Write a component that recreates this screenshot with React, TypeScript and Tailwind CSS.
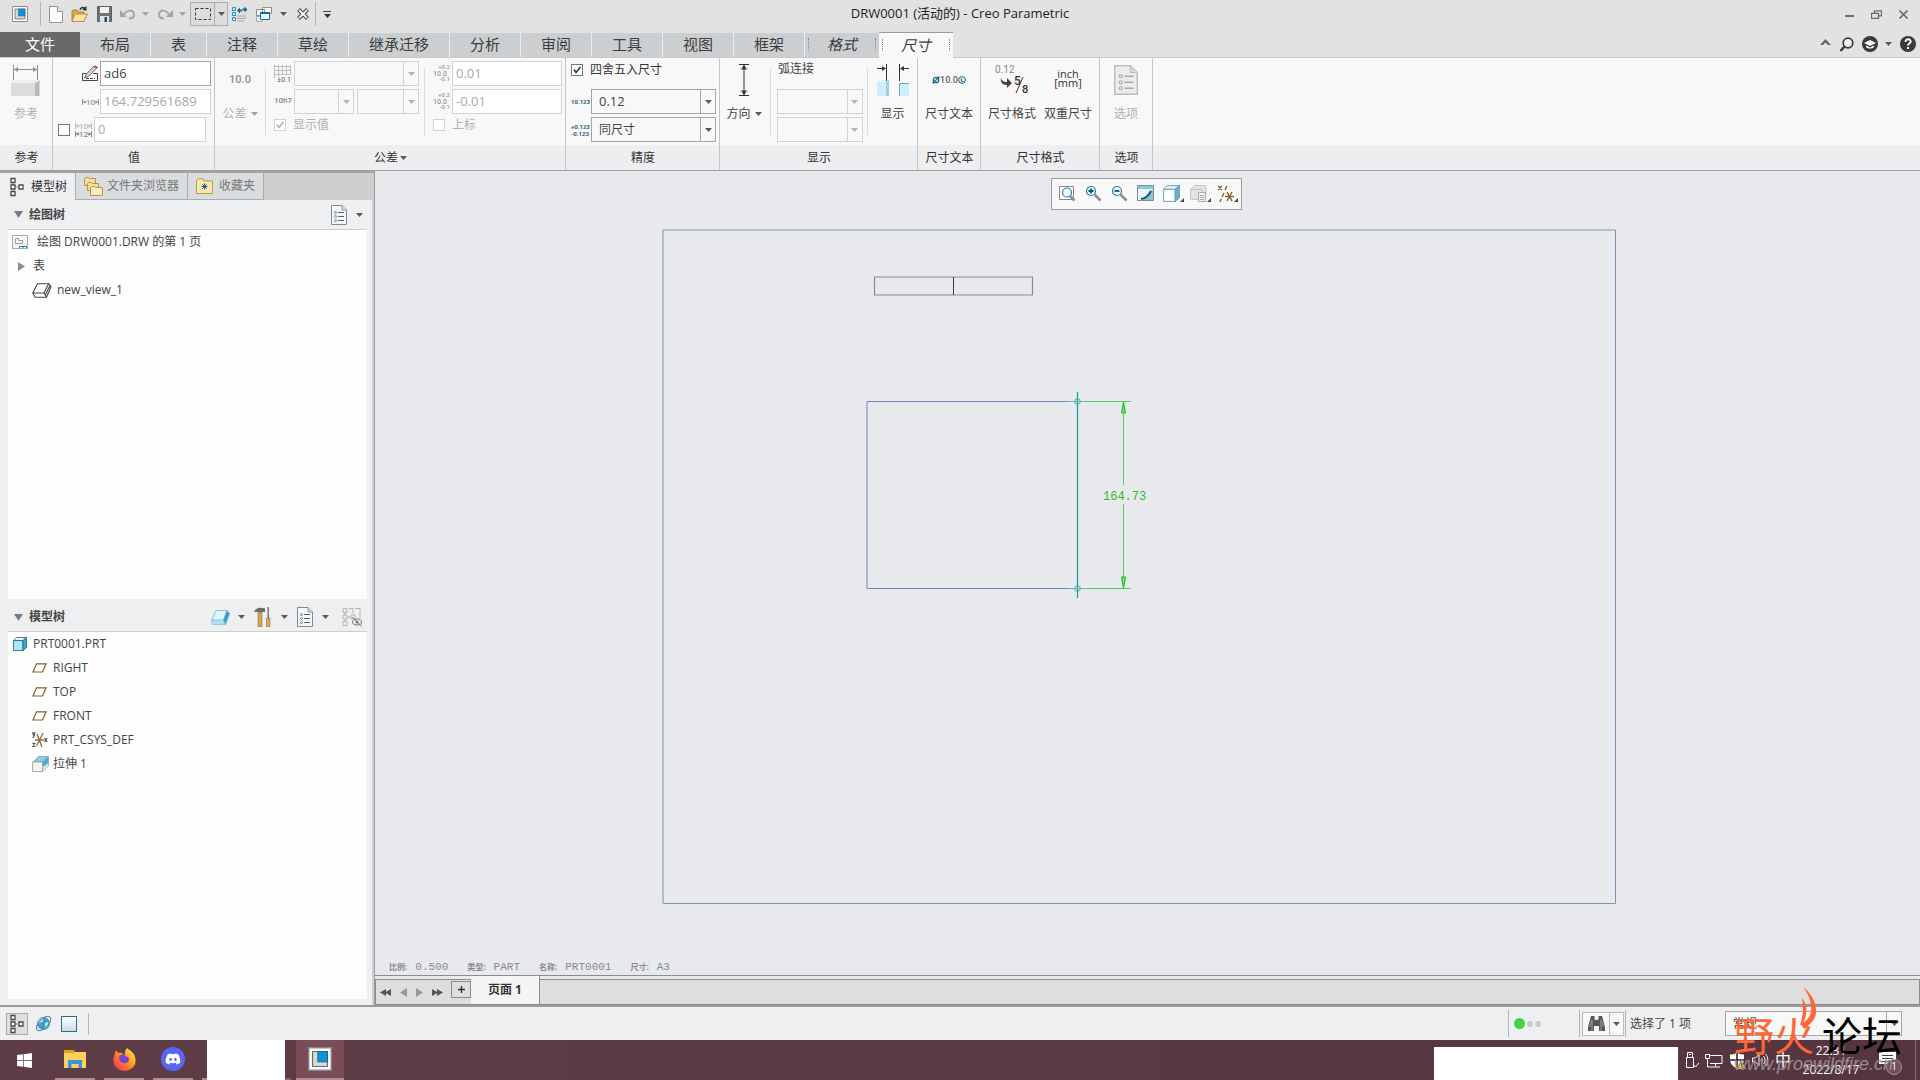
import type { ReactNode } from "react";
import { FaDiscord, FaWindows } from "react-icons/fa";

/* ---------- small shared pieces ---------- */

function Caret({ className = "text-[#5a5a5a]" }: { className?: string }) {
  return (
    <svg width="7" height="4" viewBox="0 0 7 4" className={`shrink-0 ${className}`} aria-hidden="true">
      <path d="M0 0h7L3.5 4z" fill="currentColor" />
    </svg>
  );
}

function Sep() {
  return <span className="my-2.5 w-px shrink-0 self-stretch bg-[#dcdcdc]" />;
}

function Drop({ label, value, disabled = false, className }: { label: string; value?: string; disabled?: boolean; className: string }) {
  return (
    <span className={`relative block h-[25px] ${className}`}>
      <select
        aria-label={label}
        disabled={disabled}
        className={`h-full w-full appearance-none border bg-[#f8f8f8] pl-[7px] opacity-100 ${disabled ? "border-[#d2d2d2]" : "border-[#a5a5a5]"}`}
      >
        <option>{value ?? ""}</option>
      </select>
      <span className={`pointer-events-none absolute inset-y-px right-px flex w-[15px] items-center justify-center border-l ${disabled ? "border-[#d2d2d2]" : "border-[#a5a5a5]"}`}>
        <Caret className={disabled ? "text-[#b4b4b4]" : "text-[#5a5a5a]"} />
      </span>
    </span>
  );
}

function Field({ label, value, disabled = false, className }: { label: string; value: string; disabled?: boolean; className: string }) {
  return (
    <input
      aria-label={label}
      defaultValue={value}
      disabled={disabled}
      className={`h-[25px] border bg-white px-[3px] pb-0.5 text-[13px] ${disabled ? "border-[#d2d2d2] text-[#a8a8a8]" : "border-[#a5a5a5] text-[#444]"} ${className}`}
    />
  );
}

function Check({ label, checked = false, disabled = false, children }: { label?: string; checked?: boolean; disabled?: boolean; children?: ReactNode }) {
  return (
    <label className={`flex items-center gap-[7px] ${disabled ? "text-[#b0b0b0]" : "text-[#333]"}`}>
      <span className="relative flex size-3">
        <input
          type="checkbox"
          aria-label={label}
          defaultChecked={checked}
          disabled={disabled}
          className={`size-3 appearance-none border bg-white ${disabled ? "border-[#d2d2d2]" : "border-[#777]"}`}
        />
        {checked && (
          <svg viewBox="0 0 12 12" className="pointer-events-none absolute inset-0" aria-hidden="true">
            <path d="M3 5.5 5 8.5 9.5 3" fill="none" stroke="currentColor" strokeWidth="1.6" />
          </svg>
        )}
      </span>
      {children}
    </label>
  );
}

function Group({ title, caret = false, className, children }: { title: string; caret?: boolean; className: string; children: ReactNode }) {
  return (
    <section className={`flex shrink-0 flex-col border-r border-[#c3c5c7] ${className}`}>
      <div className="flex h-[87px] bg-[#f8f8f8]">{children}</div>
      <div className="flex h-[25px] items-center justify-center gap-0.5 bg-[#edeef0] pl-px text-xs text-[#333]">
        {title}
        {caret && <Caret />}
      </div>
    </section>
  );
}

function BigButton({ label, caret = false, disabled = false, className, children }: { label: string; caret?: boolean; disabled?: boolean; className: string; children: ReactNode }) {
  return (
    <button disabled={disabled} className={`flex shrink-0 flex-col items-center pt-1.5 text-xs ${disabled ? "text-[#b0b0b0]" : "text-[#444]"} ${className}`}>
      <span className="flex h-8 items-center justify-center">{children}</span>
      <span className="mt-2.5 flex items-center gap-1 whitespace-nowrap">
        {label}
        {caret && <Caret className={disabled ? "text-[#a0a0a0]" : "text-[#5a5a5a]"} />}
      </span>
    </button>
  );
}

/* ---------- icons ---------- */

function AppIcon({ size = 16 }: { size?: number }) {
  return (
    <svg width={size} height={size} viewBox="0 0 16 16" aria-hidden="true">
      <path d="M.5.5h15v15H.5z" fill="#fff" stroke="#888" />
      <path d="M3 3h10v10H3z" fill="#d8d8d0" stroke="#6a6a6a" strokeWidth=".8" />
      <path d="M6.500 3H13v7H6.500z" fill="#0a96dc" stroke="#2b5a78" strokeWidth=".5" />
    </svg>
  );
}

function NewIcon() {
  return (
    <svg width="14" height="17" viewBox="0 0 14 17" aria-hidden="true">
      <path d="M.5.5h8l5 5v11H.5z" fill="#fbfbfb" stroke="#8f9397" />
      <path d="M8.500.5v5h5" fill="#e5eaee" stroke="#8f9397" />
    </svg>
  );
}

function OpenIcon() {
  return (
    <svg width="17" height="17" viewBox="0 0 17 17" aria-hidden="true">
      <path d="M1 15V5l1-1h4l1 2h6v2" fill="#dca953" stroke="#b58131" />
      <path d="M1 15.500 4 8h12.500L13 15.500z" fill="#fbe2a4" stroke="#c08d3b" />
      <path d="M9 4c1-3 3-3 5-1.500" fill="none" stroke="#333" strokeWidth="1.500" />
      <path d="M15.500 0v5L11 3.500z" fill="#333" />
    </svg>
  );
}

function SaveIcon() {
  return (
    <svg width="15" height="16" viewBox="0 0 15 16" aria-hidden="true">
      <path d="M.5.5h14v15H.5z" fill="#707376" stroke="#5c5f61" />
      <path d="M3 1h9v6H3z" fill="#f1f1f1" />
      <path d="M3 10h9v6H3z" fill="#dbe4ea" />
      <path d="M7.500 11H10v5H7.500z" fill="#2f4858" />
    </svg>
  );
}

function UndoIcon({ flip = false }: { flip?: boolean }) {
  return (
    <svg width="16" height="12" viewBox="0 0 16 12" className={flip ? "-scale-x-100" : ""} aria-hidden="true">
      <path d="M4 7C6 1.500 14 1 14 6.500c0 3-2 4-5 4" fill="none" stroke="#a5a5a5" strokeWidth="2" />
      <path d="M0 2v7h7z" fill="#a5a5a5" />
    </svg>
  );
}

function RegenIcon() {
  return (
    <svg width="16" height="16" viewBox="0 0 16 16" fill="none" aria-hidden="true">
      <path d="M.5 1.500h3v3h-3zM.5 6.500h3v3h-3zM.5 11.500h3v3h-3z" stroke="#1b95cc" />
      <path d="M5 10h9M5 12.500h9M5 15h7" stroke="#a5a5a5" />
      <path d="M5 4.500 8 1.500v2h2v2H8v2zM15.500 3.500l-3 3v-2h-2v-2h2v-2z" fill="#156b8c" />
    </svg>
  );
}

function WindowsIcon() {
  return (
    <svg width="16" height="15" viewBox="0 0 16 15" aria-hidden="true">
      <path d="M6.500.5h9v6h-9zM.5 2.500h8v6h-8z" fill="#f5f5f5" stroke="#8c8c8c" />
      <path d="M.5 9.500h6v5h-6z" fill="#eee" stroke="#aaa" />
      <path d="M4.500 5.500h9v7h-9z" fill="#e9f6fb" stroke="#1a6f91" />
      <path d="M4 5h10v2H4z" fill="#1a6f91" />
    </svg>
  );
}

function ListDoc({ size = 16, muted = false }: { size?: number; muted?: boolean }) {
  const line = muted ? "#a9a9a9" : "#5d6265";
  return (
    <svg width={size} height={(size * 5) / 4} viewBox="0 0 16 20" aria-hidden="true">
      <path d="M.5.5h10.500l4.500 4.500v14.500H.5z" fill={muted ? "#ececec" : "#f2f6f9"} stroke={muted ? "#bdbdbd" : "#85898c"} />
      <path d="M11 .5v4.500h4.500" fill="#d5d9dc" stroke={muted ? "#bdbdbd" : "#85898c"} strokeWidth=".8" />
      <path d="M7 7.500h6M7 11.500h6M7 15.500h6" stroke={line} />
      <g fill="none" stroke={line} strokeWidth=".8">
        <circle cx="4.500" cy="7.500" r="1" />
        <circle cx="4.500" cy="11.500" r="1" />
        <circle cx="4.500" cy="15.500" r="1" />
      </g>
    </svg>
  );
}

function TreeIcon() {
  return (
    <svg width="14" height="20" viewBox="0 0 14 20" fill="none" stroke="#4a4a4a" aria-hidden="true">
      <path d="M3 5v10M3 10h6" stroke="#999" />
      <path d="M1 1.500h4v4H1zM1 8h4v4H1zM1 14.500h4v4H1zM9 8h4v4H9z" fill="#fff" strokeWidth="1.300" />
    </svg>
  );
}

function FolderIcon({ star = false }: { star?: boolean }) {
  return star ? (
    <svg width="17" height="16" viewBox="0 0 17 16" aria-hidden="true">
      <path d="M.5 15.500V3L2 .8h5L8 3h8.500v12.500z" fill="#fbe6b0" stroke="#c2974e" />
      <path d="M8.500 5.500v6M5.500 8.500h6M6.300 6.300l4.400 4.400M10.700 6.300l-4.400 4.400" stroke="#1b6585" />
    </svg>
  ) : (
    <svg width="19" height="19" viewBox="0 0 19 19" fill="#f7dca0" stroke="#bd9149" aria-hidden="true">
      <path d="M.5 8.500v-7l1-1h3l1 1h6v7z" />
      <path d="M3.500 13.500v-7l1-1h3l1 1h6v7z" />
      <path d="M6.500 18.500v-8l1-1h3l1 1h7v8z" fill="#fcebbd" />
    </svg>
  );
}

function RefIcon() {
  return (
    <svg width="30" height="32" viewBox="0 0 30 32" aria-hidden="true">
      <path d="M2.500 1v15M26.500 1v15M3 5.500h23" stroke="#8f8f8f" fill="none" />
      <path d="M3 5.500 7 3v5zM26 5.500 22 3v5z" fill="#8f8f8f" />
      <path d="M3 16h25l-4 4H0z" fill="#efefef" />
      <path d="M0 19h24v13H0z" fill="#dcdcdc" />
      <path d="M24 19.500l4.500-3.500v16H24z" fill="#b9b9b9" />
    </svg>
  );
}

function PencilIcon() {
  return (
    <svg width="17" height="17" viewBox="0 0 17 17" aria-hidden="true">
      <path d="M4 8.500H.5v7h15v-7H11" fill="#fff" stroke="#444" />
      <path d="M4 13.500h9" stroke="#444" strokeDasharray="3 1" />
      <path d="M2.500 13 4.500 9l7.500-8 2.500 2-7.500 8z" fill="#d9d4cd" stroke="#444" strokeWidth=".8" />
      <path d="m12 1.500 1.500-1.200L16 2.500l-1.300 1.300z" fill="#c44" />
    </svg>
  );
}

function DimGlyph({ text, color = "#999" }: { text: string; color?: string }) {
  return (
    <svg width="17" height="8" viewBox="0 0 17 8" aria-hidden="true">
      <path d="M.5 1v6M16.500 1v6M1 4h3.500M12.500 4H16" stroke={color} />
      <path d="M1 4l2.500-2v4zM16 4l-2.500-2v4z" fill={color} />
      <text x="8.500" y="7" fontSize="8" fontWeight="500" textAnchor="middle" fill={color} className="font-[Roboto,sans-serif]">
        {text}
      </text>
    </svg>
  );
}

function Tolerance() {
  return (
    <svg width="17" height="17" viewBox="0 0 17 17" fill="#999" className="overflow-visible font-[Roboto,sans-serif]" fontWeight="500" aria-hidden="true">
      <text x="17" y="4" fontSize="6" textAnchor="end">+0.2</text>
      <text x="0" y="11" fontSize="7">10.0</text>
      <text x="17" y="16" fontSize="6" textAnchor="end">-0.1</text>
    </svg>
  );
}

function TolTable() {
  return (
    <svg width="17" height="17" viewBox="0 0 17 17" className="overflow-visible" aria-hidden="true">
      <path d="M0 1.500h17M0 5.500h17M0 9.500h17M.5 0v13M4.500 0v12M8.500 0v10M12.500 0v10M16.500 0v10" stroke="#bdbdbd" />
      <text x="17" y="17" fontSize="7" fontWeight="500" textAnchor="end" fill="#7c7c7c" className="font-[Roboto,sans-serif]">±0.1</text>
    </svg>
  );
}

function CubeIcon({ size = 14, face = "#a9e6fb", side = "#3aa7cf", edge = "#24627e" }: { size?: number; face?: string; side?: string; edge?: string }) {
  return (
    <svg width={size} height={size} viewBox="0 0 14 14" strokeWidth=".8" strokeLinejoin="round" aria-hidden="true">
      <path d="M.5 3.500H10v10H.5z" fill={face} stroke={edge} />
      <path d="M.5 3.500 3.500.5h10L10 3.500z" fill="#dff6fd" stroke={edge} />
      <path d="M10 3.500 13.500.5v10L10 13.500z" fill={side} stroke={edge} />
    </svg>
  );
}

function PlaneIcon() {
  return (
    <svg width="15" height="10" viewBox="0 0 15 10" aria-hidden="true">
      <path d="M4.500.8h9.500L10.500 9H1z" fill="#fff" stroke="#7a6233" strokeWidth="1.200" />
    </svg>
  );
}

function CsysIcon() {
  return (
    <svg width="16" height="16" viewBox="0 0 16 16" aria-hidden="true">
      <path d="M3 8h9M5 2l5 13M11 1 4.500 14" stroke="#8a6f3d" strokeWidth="1.300" fill="none" />
      <g fontSize="7" fontWeight="700" fill="#333" className="font-[Roboto,sans-serif]">
        <text x="0" y="4">y</text>
        <text x="0" y="15">z</text>
        <text x="12" y="10">x</text>
      </g>
    </svg>
  );
}

function ExtrudeIcon() {
  return (
    <svg width="17" height="16" viewBox="0 0 17 16" strokeWidth=".8" aria-hidden="true">
      <path d="M6.500.5h10L10.500 6H.8z" fill="#8bcce4" stroke="#7ba3b5" />
      <path d="M16.500.5V10l-6 5.500V6z" fill="#cfe9f2" stroke="#9db8c4" />
      <path d="M16.500.5V7l-6 4V6z" fill="#58a9c9" />
      <path d="M.5 6h10v9.500H.5z" fill="#f3f3f3" stroke="#999" />
    </svg>
  );
}

function Magnifier({ sign }: { sign?: "+" | "-" }) {
  return (
    <svg width="17" height="17" viewBox="0 0 17 17" fill="none" aria-hidden="true">
      {!sign && <path d="M.5 1.500h14v13H.5z" stroke="#888" fill="#fdfdfd" />}
      <path d="m9.500 9.500 6 6" stroke="#8f8f8f" strokeWidth="2.500" />
      <circle cx={sign ? 6 : 8} cy={sign ? 6 : 7.5} r="4.500" fill="#eafaff" stroke="#2d7c9b" strokeWidth="1.200" />
      {sign && <path d={sign === "+" ? "M3.500 6h5M6 3.500v5" : "M3.500 6h5"} stroke="#0c5475" strokeWidth="1.800" />}
    </svg>
  );
}

function Corner() {
  return (
    <svg width="4" height="4" viewBox="0 0 4 4" className="-mr-[3px] self-end" aria-hidden="true">
      <path d="M4 0v4H0z" fill="#444" />
    </svg>
  );
}

/* ---------- title bar and ribbon ---------- */

function TitleBar() {
  return (
    <header className="relative flex h-8 items-start bg-[#e2e2e2]">
      <div className="flex h-7 items-center pl-3">
        <AppIcon />
        <span className="mx-2 ml-3 h-6 w-px bg-[#b4b4b4]" />
        <button aria-label="新建"><NewIcon /></button>
        <button aria-label="打开" className="ml-2"><OpenIcon /></button>
        <button aria-label="保存" className="ml-[9px]"><SaveIcon /></button>
        <button aria-label="撤消" className="ml-2 flex items-center gap-1.5">
          <UndoIcon />
          <Caret className="text-[#a5a5a5]" />
        </button>
        <button aria-label="重做" className="ml-2 flex items-center gap-1.5">
          <UndoIcon flip />
          <Caret className="text-[#a5a5a5]" />
        </button>
        <div className="ml-1 flex h-6 border border-[#a9abad] bg-[#dcdddf]">
          <button aria-label="选择" className="flex w-[23px] items-center justify-center">
            <svg width="16" height="12" viewBox="0 0 16 12" aria-hidden="true">
              <path d="M.5.5h15v11H.5z" fill="none" stroke="#333" strokeDasharray="3 2" />
            </svg>
          </button>
          <button aria-label="选择选项" className="flex w-[13px] items-center justify-center border-l border-[#a9abad]"><Caret /></button>
        </div>
        <button aria-label="重新生成" className="ml-1"><RegenIcon /></button>
        <button aria-label="窗口" className="ml-2 flex items-center gap-2"><WindowsIcon /><Caret /></button>
        <button aria-label="关闭窗口" className="ml-2.5">
          <svg width="12" height="12" viewBox="0 0 12 12" aria-hidden="true">
            <path d="m1.500 1.500 9 9m0-9-9 9" stroke="#444" strokeWidth="4" />
            <path d="m2 2 8 8m0-8-8 8" stroke="#fff" strokeWidth="1.800" />
          </svg>
        </button>
        <span className="ml-1.5 mr-[7px] h-6 w-px bg-[#b4b4b4]" />
        <button aria-label="自定义" className="flex flex-col items-center gap-0.5">
          <span className="h-px w-2 bg-[#444]" />
          <Caret className="text-[#333]" />
        </button>
      </div>
      <h1 className="pointer-events-none absolute inset-x-0 top-0 flex h-7 items-center justify-center text-[13px] text-[#222]">
        DRW0001 (活动的) - Creo Parametric
      </h1>
      <div className="ml-auto flex h-7 items-center gap-[17px] pr-3 text-[#6e6e6e]">
        <button aria-label="最小化" className="mt-1 h-0.5 w-[9px] bg-[#6e6e6e]" />
        <button aria-label="还原">
          <svg width="11" height="9" viewBox="0 0 11 9" fill="none" stroke="currentColor" aria-hidden="true">
            <path d="M3.500 3V.8h7v5H8" strokeWidth="1.300" />
            <path d="M.5 3.300h7v5h-7z" strokeWidth="1.300" />
          </svg>
        </button>
        <button aria-label="关闭">
          <svg width="9" height="9" viewBox="0 0 9 9" stroke="currentColor" strokeWidth="1.600" aria-hidden="true">
            <path d="m.5.5 8 8m0-8-8 8" />
          </svg>
        </button>
      </div>
    </header>
  );
}

const TABS = [
  { name: "布局", width: "w-[71px]" },
  { name: "表", width: "w-[56px]" },
  { name: "注释", width: "w-[71px]" },
  { name: "草绘", width: "w-[71px]" },
  { name: "继承迁移", width: "w-[101px]" },
  { name: "分析", width: "w-[71px]" },
  { name: "审阅", width: "w-[71px]" },
  { name: "工具", width: "w-[71px]" },
  { name: "视图", width: "w-[71px]" },
  { name: "框架", width: "w-[71px]" },
];

function TabRow() {
  return (
    <nav className="flex h-[26px] items-stretch border-b border-[#c6c8ca] bg-[#e2e2e2] text-[15px] leading-[22px] text-[#3c3c3c]">
      <button className="w-20 bg-[#696969] pb-0.5 text-white">文件</button>
      {TABS.map((tab) => (
        <button key={tab.name} className={`mt-px shrink-0 border-r border-[#eceded] bg-[#cbcfd1] pb-0.5 ${tab.width}`}>
          {tab.name}
        </button>
      ))}
      <button className="mt-px flex w-[74px] items-center justify-between bg-[#cbcfd1] px-[3px] pb-0.5 italic">
        <span className="h-3 border-l border-dotted border-[#888]" />
        格式
        <span className="h-3 border-l border-dotted border-[#888]" />
      </button>
      <button className="-mb-px flex w-[74px] items-center justify-between border-t border-[#999] bg-[#f8f8f8] px-[3px] pb-0.5 italic">
        <span className="h-3 border-l border-dotted border-[#888]" />
        尺寸
        <span className="h-3 border-l border-dotted border-[#888]" />
      </button>
      <div className="ml-auto flex items-center gap-2 pb-px pr-1 text-[#3a3a3a]">
        <button aria-label="最小化功能区">
          <svg width="11" height="6" viewBox="0 0 11 6" className="mb-1" aria-hidden="true">
            <path d="M0 6 5.500 0 11 6H8L5.500 3.500 3 6z" fill="#666" />
          </svg>
        </button>
        <button aria-label="搜索">
          <svg width="15" height="15" viewBox="0 0 15 15" aria-hidden="true">
            <circle cx="9" cy="6" r="4.800" fill="#edf2f6" stroke="currentColor" strokeWidth="1.700" />
            <path d="m5.500 9.500-4 4.500" stroke="currentColor" strokeWidth="2.500" />
          </svg>
        </button>
        <button aria-label="学习" className="flex items-center gap-[7px]">
          <svg width="16" height="16" viewBox="0 0 16 16" aria-hidden="true">
            <circle cx="8" cy="8" r="8" fill="currentColor" />
            <path d="M2 7 8 4l6 3-6 3z" fill="#fff" />
            <path d="M4 9.500V11c2 2 6 2 8 0V9.500L8 11.500z" fill="#fff" />
          </svg>
          <Caret />
        </button>
        <button aria-label="帮助">
          <svg width="16" height="16" viewBox="0 0 16 16" aria-hidden="true">
            <circle cx="8" cy="8" r="8" fill="currentColor" />
            <path d="M5.500 6c0-4 5.500-3.300 5.200-.3C10.500 7.500 8 7.500 8 9.500M8 11v2" stroke="#fff" strokeWidth="1.900" fill="none" />
          </svg>
        </button>
      </div>
    </nav>
  );
}

function Ribbon() {
  return (
    <div className="flex border-b border-[#9d9fa1] bg-[#f8f8f8] text-xs">
      <Group title="参考" className="w-[53px]">
        <BigButton label="参考" disabled className="w-[52px]"><RefIcon /></BigButton>
      </Group>

      <Group title="值" className="w-[162px]">
        <div className="flex w-full flex-col gap-[3px] pt-[3px]">
          <div className="flex items-center justify-end gap-px pr-[3px]">
            <PencilIcon />
            <Field label="名称" value="ad6" className="w-[111px]" />
          </div>
          <div className="flex items-center justify-end gap-px pr-[3px]">
            <DimGlyph text="10" />
            <Field label="值" value="164.729561689" disabled className="w-[111px]" />
          </div>
          <div className="flex items-center pl-[5px]">
            <Check label="覆盖值" />
            <span className="ml-[5px] mr-0.5 flex flex-col">
              <DimGlyph text="10" color="#bbb" />
              <DimGlyph text="12" color="#888" />
            </span>
            <Field label="覆盖" value="0" disabled className="w-[112px]" />
          </div>
        </div>
      </Group>

      <Group title="公差" caret className="w-[351px]">
        <BigButton label="公差" caret disabled className="w-[50px]">
          <span className="font-[Roboto,sans-serif] text-[11px] font-medium text-[#8c8c8c]">10.0</span>
        </BigButton>
        <Sep />
        <div className="flex w-[158px] flex-col gap-[3px] pl-2 pt-[3px]">
          <div className="flex items-center gap-[3px]">
            <TolTable />
            <Drop label="公差表" disabled className="w-[125px]" />
          </div>
          <div className="flex items-center gap-[3px]">
            <span className="w-[17px] whitespace-nowrap font-[Roboto,sans-serif] text-[8px] font-medium text-[#888]">10h7</span>
            <Drop label="公差等级" disabled className="w-[60px]" />
            <Drop label="公差值" disabled className="w-[62px]" />
          </div>
          <Check checked disabled>显示值</Check>
        </div>
        <Sep />
        <div className="flex flex-col gap-[3px] pl-2 pt-[3px]">
          <div className="flex items-center gap-0.5">
            <Tolerance />
            <Field label="上公差" value="0.01" disabled className="w-[110px]" />
          </div>
          <div className="flex items-center gap-0.5">
            <Tolerance />
            <Field label="下公差" value="-0.01" disabled className="w-[110px]" />
          </div>
          <Check disabled>上标</Check>
        </div>
      </Group>

      <Group title="精度" className="w-[154px]">
        <div className="flex flex-col gap-[3px] pl-[5px] pt-[3px]">
          <div className="flex h-[17px] items-center"><Check checked>四舍五入尺寸</Check></div>
          <div className="mt-2 flex items-center gap-px">
            <span className="w-[19px] font-[Roboto,sans-serif] text-[6px] font-bold text-[#335c72]">10.123</span>
            <Drop label="小数位数" value="0.12" className="w-[125px] text-[13px] text-[#444]" />
          </div>
          <div className="flex items-center gap-px">
            <span className="w-[19px] font-[Roboto,sans-serif] text-[6px] font-bold leading-[7px] text-[#335c72]">+0.123 -0.123</span>
            <Drop label="公差小数位数" value="同尺寸" className="w-[125px] text-xs text-[#444]" />
          </div>
        </div>
      </Group>

      <Group title="显示" className="w-[198px]">
        <BigButton label="方向" caret className="w-12">
          <svg width="10" height="32" viewBox="0 0 10 32" aria-hidden="true">
            <path d="M0 .5h10M0 31.500h10M5 1v30" stroke="#333" />
            <path d="M5 1 2 5.500h6zM5 31 2 26.500h6z" fill="#333" />
          </svg>
        </BigButton>
        <span className="w-0.5" />
        <Sep />
        <div className="flex w-[97px] flex-col gap-[3px] pl-1.5 pt-[3px] text-[#444]">
          <span className="flex h-[25px] items-start pl-px leading-4">弧连接</span>
          <Drop label="弧连接" disabled className="w-[86px]" />
          <Drop label="文本方向" disabled className="w-[86px]" />
        </div>
        <Sep />
        <BigButton label="显示" className="w-[49px]">
          <svg width="32" height="32" viewBox="0 0 32 32" aria-hidden="true">
            <path d="M0 18h9v14H0z" fill="#cdeefa" />
            <path d="m9 18 3-3v17H9z" fill="#a6ccda" />
            <path d="M0 18 3 15.500h9L9 18z" fill="#e7f7fc" />
            <path d="M22 19.500h10V32H22z" fill="#cdeefa" />
            <path d="M22.500 32V19.500H32" fill="none" stroke="#7fa3b4" />
            <path d="M9.500 0v17M22.500 0v17M0 4.500h8M24 4.500h8" stroke="#333" />
            <path d="M9 4.500 5 2v5zM23 4.500 27 2v5z" fill="#333" />
          </svg>
        </BigButton>
      </Group>

      <Group title="尺寸文本" className="w-[63px]">
        <BigButton label="尺寸文本" className="w-[62px]">
          <span className="flex items-center font-[Roboto,sans-serif] text-[9px] font-medium text-[#666]">
            <svg width="8" height="8" viewBox="0 0 8 8" fill="none" stroke="#176180" strokeWidth="1.300" aria-hidden="true">
              <circle cx="4" cy="4" r="2.700" />
              <path d="M.5 7.500 7.500.5" />
            </svg>
            10.0
            <svg width="8" height="8" viewBox="0 0 8 8" fill="none" stroke="#176180" aria-hidden="true">
              <circle cx="4" cy="4" r="3.400" />
              <path d="M3.300 2v3.500H5.500" />
            </svg>
          </span>
        </BigButton>
      </Group>

      <Group title="尺寸格式" className="w-[119px]">
        <BigButton label="尺寸格式" className="w-[62px]">
          <svg width="34" height="32" viewBox="0 0 34 32" className="overflow-visible font-[Roboto,sans-serif]" aria-hidden="true">
            <text x="0" y="9" fontSize="10" fill="#888">0.12</text>
            <path d="M6 13c0 4 3 5 6 5v-4l5 5-5 5v-3c-5 0-7-3-6-8z" fill="#444" />
            <text x="19" y="21" fontSize="12" fontWeight="500" fill="#333">5</text>
            <text x="27" y="29" fontSize="11" fontWeight="500" fill="#333">8</text>
            <path d="m21 29 7-16" stroke="#333" />
          </svg>
        </BigButton>
        <BigButton label="双重尺寸" className="w-[50px]">
          <span className="pb-1 text-[11px] font-medium leading-[9px] text-[#333]">inch<br />[mm]</span>
        </BigButton>
      </Group>

      <Group title="选项" className="w-[53px]">
        <BigButton label="选项" disabled className="w-[52px]"><ListDoc size={24} muted /></BigButton>
      </Group>
      <div className="flex grow flex-col justify-end"><div className="h-[25px] bg-[#edeef0]" /></div>
    </div>
  );
}

/* ---------- left panel ---------- */

function TreeRow({ icon, indent, children }: { icon: ReactNode; indent: string; children: ReactNode }) {
  return (
    <li className={`flex h-6 items-center ${indent}`}>
      {icon}
      {children}
    </li>
  );
}

function SidePanel() {
  return (
    <aside className="flex w-[375px] shrink-0 flex-col border-r border-[#9d9d9d] bg-[#eeeff1] text-xs text-[#444]">
      <div className="flex h-[29px] shrink-0 border-t-2 border-[#a3a3a3] bg-[#cfcfd0] text-[#777]">
        <button className="flex w-[75px] items-center gap-[7px] bg-[#eeeff1] pl-2.5 text-[#333]"><TreeIcon />模型树</button>
        <button className="flex w-[113px] items-center gap-1 border-x border-b border-[#a9abad] bg-[#dadddf] pl-2"><FolderIcon />文件夹浏览器</button>
        <button className="flex w-[76px] items-center gap-1.5 border-b border-r border-[#a9abad] bg-[#dadddf] pl-2"><FolderIcon star />收藏夹</button>
      </div>

      <div className="flex min-h-0 grow flex-col border-r-2 border-[#cfcfd0] pb-1.5 pl-2 pr-[5px]">
        <div className="flex h-[30px] shrink-0 items-center border-b border-[#cbcfd1] pl-1.5 pr-1">
          <svg width="9" height="7" viewBox="0 0 9 7" aria-hidden="true"><path d="M0 0h9L4.500 7z" fill="#7d7d7d" /></svg>
          <h2 className="ml-1.5 font-bold">绘图树</h2>
          <button aria-label="设置" className="ml-auto flex items-center gap-[9px]"><ListDoc /><Caret /></button>
        </div>
        <ul className="h-[369px] shrink-0 bg-[#fdfdfd]">
          <TreeRow
            indent="gap-[9px] pl-1"
            icon={
              <svg width="16" height="14" viewBox="0 0 16 14" fill="none" aria-hidden="true">
                <path d="M.5.5h15v13H.5z" fill="#f6f7f8" stroke="#a5a8aa" />
                <path d="M3.500 3.500h3v2h4v3h-7z" stroke="#999" />
                <path d="M7.500 13v-1.500h7V13M11 11.500V13" stroke="#1686b8" />
              </svg>
            }
          >
            绘图 DRW0001.DRW 的第 1 页
          </TreeRow>
          <TreeRow
            indent="gap-2 pl-2.5"
            icon={<svg width="7" height="9" viewBox="0 0 7 9" aria-hidden="true"><path d="M0 0v9l7-4.500z" fill="#8c8c8c" /></svg>}
          >
            表
          </TreeRow>
          <TreeRow
            indent="gap-[5px] pl-6"
            icon={
              <svg width="20" height="15" viewBox="0 0 20 15" fill="#fff" stroke="#444" strokeWidth="1.100" aria-hidden="true">
                <path d="M5.500.8H17l2 3-4.500 10.500H3L.8 10z" />
                <path d="M.8 10H12l2.500 4M12 10l4.500-9M13.300 12 18 2.500" fill="none" />
              </svg>
            }
          >
            new_view_1
          </TreeRow>
        </ul>

        <div className="flex h-[33px] shrink-0 items-center border-b border-[#cbcfd1] pl-1.5 pr-1 pt-1">
          <svg width="9" height="7" viewBox="0 0 9 7" aria-hidden="true"><path d="M0 0h9L4.500 7z" fill="#7d7d7d" /></svg>
          <h2 className="ml-1.5 font-bold">模型树</h2>
          <div className="ml-auto flex items-center gap-[9px]">
            <button aria-label="显示" className="flex items-center gap-2">
              <svg width="19" height="15" viewBox="0 0 19 15" strokeWidth=".7" stroke="#8bb8c9" aria-hidden="true">
                <path d="M5 .5h11l2.500 3-4 11H1.500L.5 11z" fill="#a6e1f5" />
                <path d="M5 .5h11L12.500 10H.8z" fill="#dcf5fc" />
                <path d="m16 .5 2.500 3-4 11L12.500 10z" fill="#2c9cc4" />
              </svg>
              <Caret />
            </button>
            <button aria-label="工具" className="flex items-center gap-2.5">
              <svg width="17" height="20" viewBox="0 0 17 20" aria-hidden="true">
                <path d="M0 5C2 0 7 0 11 1.500V5H2z" fill="#6a6e71" />
                <path d="M4 5h4v15H4z" fill="#d3a356" stroke="#9a7131" strokeWidth=".6" />
                <path d="M13.500 0H15v11h-1.500z" fill="#777" />
                <path d="M12.500 11H16v9h-3.500z" fill="#d9a95a" stroke="#9a7131" strokeWidth=".6" />
              </svg>
              <Caret />
            </button>
            <button aria-label="树设置" className="flex items-center gap-[9px]"><ListDoc /><Caret /></button>
            <button aria-label="树过滤" disabled className="ml-1">
              <svg width="21" height="20" viewBox="0 0 21 20" fill="none" stroke="#b4b4b4" aria-hidden="true">
                <path d="M1 1.500h4v4H1zM1 8h4v4H1zM1 14.500h4v4H1zM9 8h4v4H9zM3 5.500V8M3 12v2.500M5 10h4M7 1.500h4v5M13 1.500h5v10" />
                <ellipse cx="15" cy="15" rx="4.500" ry="3" stroke="#777" />
                <circle cx="15" cy="15" r="1.500" fill="#777" stroke="none" />
                <path d="m10 10 10 9.500" stroke="#777" />
              </svg>
            </button>
          </div>
        </div>
        <ul className="grow bg-[#fdfdfd]">
          <TreeRow indent="gap-1.5 pl-[5px]" icon={<CubeIcon />}>PRT0001.PRT</TreeRow>
          {["RIGHT", "TOP", "FRONT"].map((name) => (
            <TreeRow key={name} indent="gap-1.5 pl-6" icon={<PlaneIcon />}>{name}</TreeRow>
          ))}
          <TreeRow indent="gap-[5px] pl-6" icon={<CsysIcon />}>PRT_CSYS_DEF</TreeRow>
          <TreeRow indent="gap-1 pl-6" icon={<ExtrudeIcon />}>拉伸 1</TreeRow>
        </ul>
      </div>
    </aside>
  );
}

/* ---------- drawing area ---------- */

const INFO = [
  { key: "比例:", value: "0.500" },
  { key: "类型:", value: "PART" },
  { key: "名称:", value: "PRT0001" },
  { key: "尺寸:", value: "A3" },
];

function Drawing() {
  return (
    <svg viewBox="-1 0 1545 804" className="absolute inset-0 h-full w-full" fill="none">
      <path d="M287 59h952.500v673.500H287z" stroke="#8390b0" />
      <path d="M498.500 106h158v18h-158z" stroke="#8b8799" strokeWidth="1.200" />
      <path d="M577.500 106v18" stroke="#39355f" />
      <path d="M701 230.500H491v187h210" stroke="#7385b5" />
      <path d="M701.500 221v206" stroke="#13999b" strokeWidth="1.200" />
      <path d="M692 230.500h19M692 417.500h19" stroke="#67b9b9" />
      <g stroke="#43aaa9">
        <circle cx="701.500" cy="230.500" r="2.800" />
        <circle cx="701.500" cy="417.500" r="2.800" />
      </g>
      <path d="M711 230.500h44M711 417.500h44M747.500 231v83M747.500 333v84" stroke="#59cc59" />
      <path d="m747.500 231 2 11h-4zM747.500 417l2-11h-4z" stroke="#11bf11" fill="#7edb7e" />
      <text x="727" y="329" fontSize="12" fill="#2fbb2f" className="font-['Liberation_Mono',monospace]">164.73</text>
    </svg>
  );
}

function Canvas() {
  return (
    <main className="flex min-w-0 grow flex-col bg-[#e8e9ed]">
      <div className="relative grow border-b border-[#8c8c8c]">
        <Drawing />
        <div className="absolute left-[676px] top-[7px] flex h-8 items-center gap-[9px] border border-[#9d9d9d] bg-[#f8f8f8] pb-0.5 pl-[7px] pr-1.5">
          <button aria-label="重新调整"><Magnifier /></button>
          <button aria-label="放大"><Magnifier sign="+" /></button>
          <button aria-label="缩小"><Magnifier sign="-" /></button>
          <button aria-label="重画">
            <svg width="17" height="17" viewBox="0 0 17 17" aria-hidden="true">
              <path d="M.5.500h16v15H.5z" fill="#e6f6fb" stroke="#888" />
              <path d="M1 1h15v3H1z" fill="#89c9df" />
              <path d="m5 15 9-10 2 0v10z" fill="#8ac4da" />
              <path d="M4 14c4 0 8-4 10-8" stroke="#114d69" strokeWidth="1.800" fill="none" />
            </svg>
          </button>
          <button aria-label="显示样式" className="flex"><CubeIcon size={17} face="#fff" side="#5fb3d0" edge="#6d9eb1" /><Corner /></button>
          <button aria-label="已保存方向" className="flex">
            <svg width="17" height="17" viewBox="0 0 17 17" stroke="#c4c4c4" aria-hidden="true">
              <path d="M.5 4.500 4 .5h12v9l-4 5H.5z" fill="#e4e4e4" />
              <path d="M.5 4.500H12v10" fill="none" />
              <path d="M8.500 7.500h7v9h-7z" fill="#f1f1f1" stroke="#aaa" />
              <path d="M10 10.500h4M10 12.500h4M10 14.500h4" stroke="#aaa" />
            </svg>
            <Corner />
          </button>
          <button aria-label="基准显示" className="flex">
            <svg width="17" height="17" viewBox="0 0 17 17" stroke="#806630" strokeWidth="1.500" aria-hidden="true">
              <path d="m1 1 4 4m0-4L1 5M10 1 8 5M7 8l-2 4M4 14l-1 3M8 11.500h9M10 7l5 9m0-9-5 9" />
            </svg>
            <Corner />
          </button>
        </div>
        <dl className="absolute bottom-0 left-[14px] flex gap-[19px] text-[#858a96]">
          {INFO.map((item) => (
            <div key={item.key} className="flex items-center gap-2">
              <dt className="text-[8px] font-bold">{item.key}</dt>
              <dd className="font-['Liberation_Mono',monospace] text-[11px]">{item.value}</dd>
            </div>
          ))}
        </dl>
      </div>
      <div className="mt-[3px] flex h-[26px] shrink-0 border border-[#8c8c8c] bg-[#dedede]">
        <div className="flex items-center gap-[9px] pl-1 pr-2 text-[#555]">
          <button aria-label="第一页"><svg width="11" height="7" viewBox="0 0 11 7" aria-hidden="true"><path d="M6 0v7L0 3.500zM11 0v7L5 3.500z" fill="currentColor" /></svg></button>
          <button aria-label="上一页"><svg width="7" height="9" viewBox="0 0 7 9" aria-hidden="true"><path d="M7 0v9L0 4.500z" fill="#9a9a9a" /></svg></button>
          <button aria-label="下一页"><svg width="7" height="9" viewBox="0 0 7 9" aria-hidden="true"><path d="M0 0v9l7-4.500z" fill="#9a9a9a" /></svg></button>
          <button aria-label="最后一页"><svg width="11" height="7" viewBox="0 0 11 7" aria-hidden="true"><path d="M0 0v7l6-3.500zM5 0v7l6-3.500z" fill="currentColor" /></svg></button>
        </div>
        <button aria-label="添加页" className="mt-px flex h-[17px] w-5 items-center justify-center border border-[#8c8c8c]">
          <svg width="7" height="7" viewBox="0 0 7 7" aria-hidden="true"><path d="M3.500 0v7M0 3.500h7" stroke="#333" strokeWidth="1.400" /></svg>
        </button>
        <button className="-mt-1 w-[69px] border-r border-[#8c8c8c] bg-[#f3f4f5] text-xs font-bold text-[#333]">页面 1</button>
      </div>
    </main>
  );
}

/* ---------- status bar, taskbar ---------- */

function StatusBar() {
  return (
    <div className="flex h-[35px] shrink-0 items-center border-t-2 border-[#9a9a9a] bg-[#eeeff1] pr-[18px] text-xs text-[#444]">
      <div className="flex items-center gap-[7px] pl-1.5">
        <button aria-label="导航器" className="flex size-[22px] items-center justify-center border border-[#aaa] bg-[#dedfe0]"><TreeIcon /></button>
        <button aria-label="浏览器">
          <svg width="17" height="17" viewBox="0 0 17 17" fill="none" aria-hidden="true">
            <circle cx="8.500" cy="8.500" r="6.500" fill="#3aa0cb" />
            <path d="M5 4c2-2 4 0 3 2s-4 1-4 3c-2-1-1-4 1-5zM10 8c3-2 5 0 3 3l-3 3z" fill="#c2e8f6" />
            <ellipse cx="8.500" cy="8.500" rx="9" ry="4.500" transform="rotate(-45 8.500 8.500)" stroke="#777" />
          </svg>
        </button>
        <button aria-label="全屏" className="ml-0.5 size-4 border border-[#2a6d8a] bg-linear-to-b from-white to-[#c9dde6]" />
        <span className="ml-1 h-[22px] w-px bg-[#b4b4b4]" />
      </div>
      <div className="ml-auto flex h-[27px] items-center">
        <div className="flex h-full w-[71px] items-center gap-0.5 border-l border-[#b4b4b4] pl-[5px]">
          <span className="size-[11px] rounded-full bg-[#43d243]" />
          <span className="size-1.5 rounded-full bg-[#cbcbcb]" />
          <span className="size-1.5 rounded-full bg-[#cbcbcb]" />
        </div>
        <div className="flex h-full w-[47px] items-center border-x border-[#b4b4b4] pl-0.5">
          <button aria-label="查找" className="flex h-6 w-7 items-center justify-center border border-[#bbb] bg-[#f8f8f8]">
            <svg width="17" height="16" viewBox="0 0 17 16" aria-hidden="true">
              <path d="M3 0h3.500v3l1 1h2l1-1V0H14l3 11v4h-6v-5H6v5H0v-4z" fill="#55585a" />
              <path d="M1.500 11 4 4v11M15.500 11 13 4v11" stroke="#999" fill="none" />
            </svg>
          </button>
          <button aria-label="查找选项" className="flex h-6 w-[14px] items-center justify-center border-y border-r border-[#bbb] bg-[#f8f8f8]"><Caret /></button>
        </div>
        <span className="w-[99px] pl-1">选择了 1 项</span>
        <Drop label="过滤器" value="常规" className="w-[177px]" />
      </div>
    </div>
  );
}

function TaskButton({ label, className = "", children }: { label: string; className?: string; children: ReactNode }) {
  return (
    <button aria-label={label} className={`flex h-10 items-center justify-center border-b-2 border-[#b58b93] ${className}`}>
      {children}
    </button>
  );
}

function Taskbar() {
  return (
    <footer className="flex h-10 shrink-0 items-stretch bg-linear-to-r from-[#5e3d46] to-[#553640] text-white">
      <button aria-label="开始" className="flex w-[48px] items-center justify-center"><FaWindows size={17} /></button>
      <div className="flex gap-[9px] pl-[7px]">
        <TaskButton label="文件资源管理器" className="w-10">
          <svg width="22" height="18" viewBox="0 0 22 18" aria-hidden="true">
            <path d="M0 0h9l2 2h11v16H0z" fill="#fbd162" />
            <path d="M0 0h9l2 2-1 1H0z" fill="#e3a213" />
            <path d="M4 10h14v8h-3.500v-4h-7v4H4z" fill="#3c93d6" />
          </svg>
        </TaskButton>
        <TaskButton label="Firefox" className="w-10">
          <svg width="23" height="23" viewBox="0 0 23 23" aria-hidden="true">
            <defs>
              <linearGradient id="fox" x1="1" y1="0" x2="0" y2="1">
                <stop offset=".1" stopColor="#ffe43a" />
                <stop offset=".5" stopColor="#ff8a22" />
                <stop offset="1" stopColor="#ee2567" />
              </linearGradient>
            </defs>
            <circle cx="11.500" cy="12" r="6" fill="#7a3fd6" />
            <path d="M14 0c4 3 9 6 8.500 13A11 10 0 0 1 .5 13C0 8 2 6 3 2l2.500 3c2-.5 4 0 5 1.500-3 0-5 2-4 5 1 4 6 5 9 2 1.500-3-.5-5-3-5C11 5 12 2 14 0z" fill="url(#fox)" />
          </svg>
        </TaskButton>
        <TaskButton label="Discord" className="w-10">
          <span className="flex size-6 items-center justify-center rounded-full bg-[#5865f2]"><FaDiscord size={16} /></span>
        </TaskButton>
      </div>
      <span className="ml-[9px] w-[5px] border-b-2 border-[#b58b93]" />
      <div className="w-[78px] bg-white" />
      <span className="w-1.5 border-b-2 border-[#8a6069]" />
      <TaskButton label="Creo Parametric" className="ml-[5px] w-12 bg-[#7b4b57]"><AppIcon size={24} /></TaskButton>

      <div className="ml-auto flex items-center">
        <div className="h-[33px] w-[244px] self-end bg-white" />
        <div className="flex items-center gap-1.5 pl-[7px]">
          <svg width="14" height="17" viewBox="0 0 14 17" fill="none" stroke="#fff" aria-hidden="true">
            <path d="M2.500 5V.5h5V5M1.500 5.500h7v10h-7zM4 2.500h2" />
            <path d="m8 12 2.500 3L14 11" />
          </svg>
          <svg width="18" height="15" viewBox="0 0 18 15" fill="none" stroke="#fff" aria-hidden="true">
            <path d="M5 2.500h12v8H5M10.500 10.500v3M7 14h8M.5 1.500h4v4h-4zM2.500 5.500V14H7" />
          </svg>
          <svg width="17" height="17" viewBox="0 0 17 17" aria-hidden="true">
            <path d="M8 .5c2 1.500 4 2 7 2v5c0 4-3 7-7 9-4-2-7-5-7-9v-5c3 0 5-.5 7-2z" fill="#fff" />
            <path d="M8 1v15M1 8h14" stroke="#222" strokeWidth="1.500" />
            <path d="m12 8 5 9H8z" fill="#f4bd2d" />
            <path d="M12.500 11v3M12.500 15v1" stroke="#333" />
          </svg>
          <svg width="17" height="14" viewBox="0 0 17 14" fill="none" stroke="#fff" aria-hidden="true">
            <path d="M.5 5v4h3L7 12.500v-11L3.500 5zM9.500 5c1 1 1 3 0 4M11.500 3c2 2 2 6 0 8M13.500 1c3 3 3 9 0 12" />
          </svg>
          <span className="text-base">中</span>
        </div>
        <time className="w-[78px] pl-0.5 text-center text-xs leading-[19px]">
          22:31
          <br />
          2022/8/17
        </time>
        <button aria-label="通知" className="relative ml-2.5 mr-[19px]">
          <svg width="17" height="17" viewBox="0 0 17 17" aria-hidden="true">
            <path d="M0 0h17v12h-6l-3 4v-4H0z" fill="#fff" />
            <path d="M3 3.500h11M3 6.500h11M3 9.500h7" stroke="#553640" />
          </svg>
          <span className="absolute left-[7px] top-[7px] flex size-4 items-center justify-center rounded-full border border-[#a98c93] bg-[#76505a] text-[10px]">1</span>
        </button>
        <span className="mr-1 h-full w-px bg-[#85707a]" />
      </div>
    </footer>
  );
}

/* forum mark laid over the lower right corner */
function ForumMark() {
  return (
    <div className="pointer-events-none absolute bottom-2 right-[18px] flex w-[168px] flex-col">
      <div className="flex justify-between font-['Noto_Sans_CJK_SC',sans-serif] text-[40px] font-normal leading-[44px]">
        <span className="text-[#ff6633]">野火</span>
        <span className="text-black">论坛</span>
      </div>
      <svg width="18" height="42" viewBox="0 0 18 42" className="absolute bottom-[43px] left-[65px]" aria-hidden="true">
        <path d="M4 0c8 6 14 16 13 26-1 8-7 11-11 16-2-1-3-3-4-5 8-4 11-10 10-17C12 12 8 5 4 0z" fill="#ff6633" />
        <path d="M3 11c5 6 6 15 2 23-2 3-3 4-4 4 3-9 4-18 2-27z" fill="#ff6633" />
      </svg>
      <span className="font-['Liberation_Sans',sans-serif] text-lg italic leading-4 text-[#9a8a8f]">www.proewildfire.cn</span>
    </div>
  );
}

export default function App() {
  return (
    <div className="relative flex h-screen flex-col overflow-hidden bg-[#eeeff1] font-['Open_Sans','Noto_Sans_CJK_SC',sans-serif]">
      <TitleBar />
      <TabRow />
      <Ribbon />
      <div className="flex min-h-0 grow">
        <SidePanel />
        <Canvas />
      </div>
      <StatusBar />
      <Taskbar />
      <ForumMark />
    </div>
  );
}
